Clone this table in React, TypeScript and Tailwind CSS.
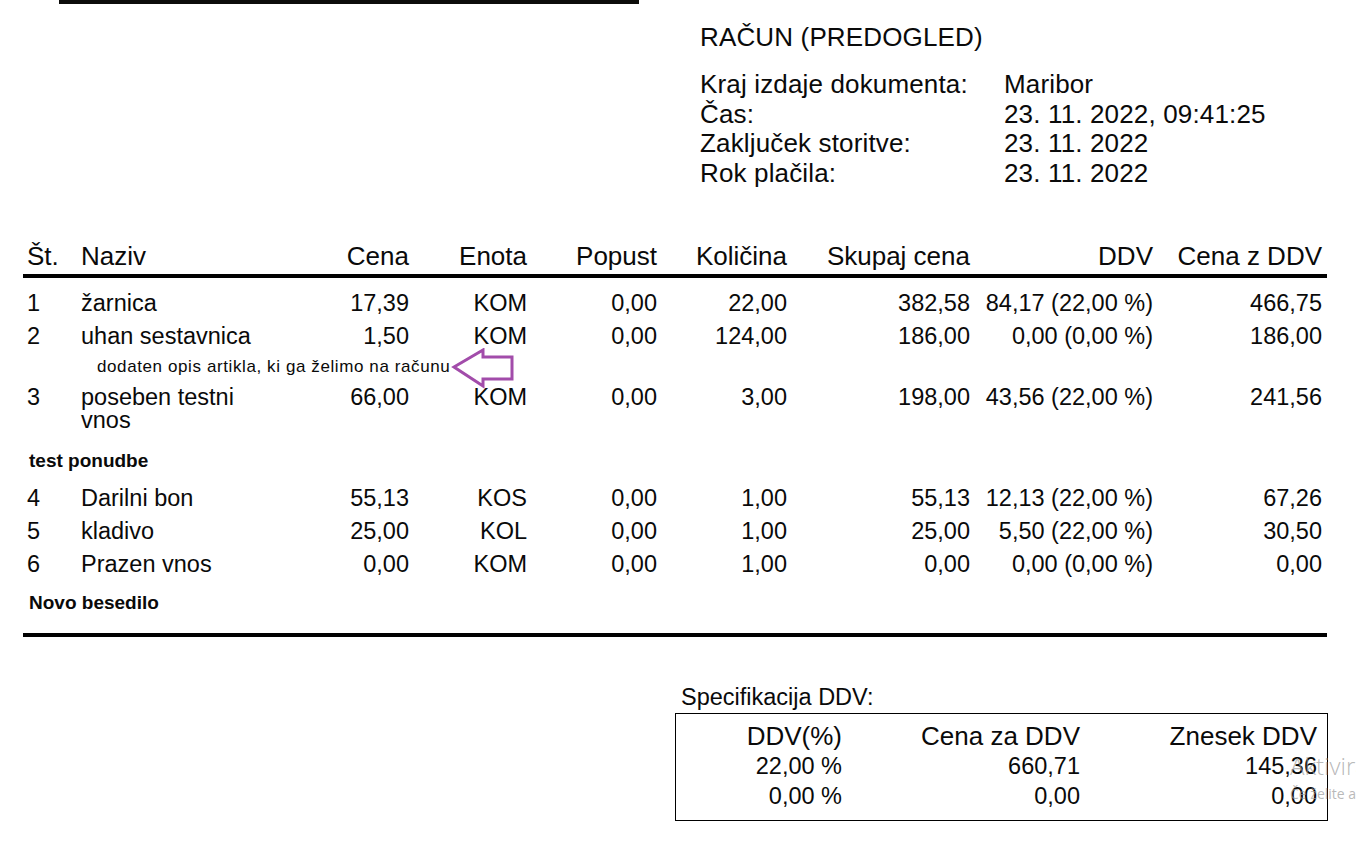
import React from "react";

const cols = "grid grid-cols-[58px_219px_109px_118px_130px_130px_183px_183px_169px] pr-[5px]";

type Row = { n: string; naziv: React.ReactNode; cena: string; enota: string; popust: string; kol: string; skupaj: string; ddv: string; zddv: string };

const rows1: Row[] = [
  { n: "1", naziv: "žarnica", cena: "17,39", enota: "KOM", popust: "0,00", kol: "22,00", skupaj: "382,58", ddv: "84,17 (22,00 %)", zddv: "466,75" },
  { n: "2", naziv: "uhan sestavnica", cena: "1,50", enota: "KOM", popust: "0,00", kol: "124,00", skupaj: "186,00", ddv: "0,00 (0,00 %)", zddv: "186,00" },
];
const row3: Row = { n: "3", naziv: (<>poseben testni<br />vnos</>), cena: "66,00", enota: "KOM", popust: "0,00", kol: "3,00", skupaj: "198,00", ddv: "43,56 (22,00 %)", zddv: "241,56" };
const rows2: Row[] = [
  { n: "4", naziv: "Darilni bon", cena: "55,13", enota: "KOS", popust: "0,00", kol: "1,00", skupaj: "55,13", ddv: "12,13 (22,00 %)", zddv: "67,26" },
  { n: "5", naziv: "kladivo", cena: "25,00", enota: "KOL", popust: "0,00", kol: "1,00", skupaj: "25,00", ddv: "5,50 (22,00 %)", zddv: "30,50" },
  { n: "6", naziv: "Prazen vnos", cena: "0,00", enota: "KOM", popust: "0,00", kol: "1,00", skupaj: "0,00", ddv: "0,00 (0,00 %)", zddv: "0,00" },
];

function ItemRow({ r }: { r: Row }) {
  return (
    <div className={`${cols} py-[5px] text-[23.5px] leading-[23px]`}>
      <div className="pl-[4px]">{r.n}</div>
      <div>{r.naziv}</div>
      <div className="text-right">{r.cena}</div>
      <div className="text-right">{r.enota}</div>
      <div className="text-right">{r.popust}</div>
      <div className="text-right">{r.kol}</div>
      <div className="text-right">{r.skupaj}</div>
      <div className="text-right">{r.ddv}</div>
      <div className="text-right">{r.zddv}</div>
    </div>
  );
}

export default function App() {
  return (
    <div
      className="relative w-[1356px] h-[842px] overflow-hidden bg-white text-[#0a0a0a]"
      style={{ fontFamily: '"Liberation Sans", Arial, sans-serif' }}
    >
      <div className="ml-[59px] w-[580px] h-[4px] bg-[#0c0c0a]" />

      <div className="ml-[700px] mt-[18px] text-[26px] leading-[30px] tracking-[0.15px]">RAČUN (PREDOGLED)</div>

      <div className="ml-[700px] mt-[18px] grid grid-cols-[304px_auto] text-[26px] leading-[29.5px] tracking-[0.15px]">
        <div>Kraj izdaje dokumenta:</div>
        <div>Maribor</div>
        <div>Čas:</div>
        <div>23. 11. 2022, 09:41:25</div>
        <div>Zaključek storitve:</div>
        <div>23. 11. 2022</div>
        <div>Rok plačila:</div>
        <div>23. 11. 2022</div>
      </div>

      <div className="ml-[23px] w-[1304px] mt-[52.75px] relative">
        <div className={`${cols} text-[26px] leading-[30px] pb-[3px]`}>
          <div className="pl-[4px]">Št.</div>
          <div>Naziv</div>
          <div className="text-right">Cena</div>
          <div className="text-right">Enota</div>
          <div className="text-right">Popust</div>
          <div className="text-right">Količina</div>
          <div className="text-right">Skupaj cena</div>
          <div className="text-right">DDV</div>
          <div className="text-right">Cena z DDV</div>
        </div>
        <div className="h-[4px] bg-black" />
        <div className="h-[9.5px]" />
        {rows1.map((r) => (
          <ItemRow key={r.n} r={r} />
        ))}
        <div className="h-[28px] pl-[74px] pt-[4px] text-[17px] leading-[20px] tracking-[0.6px]">
          dodaten opis artikla, ki ga želimo na računu
        </div>
        <ItemRow r={row3} />
        <div className="pl-[6px] pt-[11.5px] pb-[9.5px] text-[19px] leading-[24px] font-bold">test ponudbe</div>
        {rows2.map((r) => (
          <ItemRow key={r.n} r={r} />
        ))}
        <div className="pl-[6px] pt-[9.5px] pb-[18px] text-[19px] leading-[24px] font-bold">Novo besedilo</div>
        <div className="h-[4px] bg-black" />

        <svg
          className="absolute left-[428px] top-[107px]"
          width="64"
          height="42"
          viewBox="0 0 64 42"
        >
          <path
            d="M3 19 L32 2 L32 9 L61 9 L61 31 L32 31 L32 38 Z"
            fill="none"
            stroke="#a24caa"
            strokeWidth="3"
            strokeLinejoin="miter"
          />
        </svg>
      </div>

      <div className="ml-[681px] mt-[46px] text-[23.5px] leading-[28px] mb-[2px]">Specifikacija DDV:</div>
      <div className="ml-[675px] w-[653px] border border-black pt-[7px] pb-[9px]">
        <div className="grid grid-cols-[166px_238px_237px] text-[26px] leading-[30px]">
          <div className="text-right">DDV(%)</div>
          <div className="text-right">Cena za DDV</div>
          <div className="text-right">Znesek DDV</div>
        </div>
        <div className="grid grid-cols-[166px_238px_237px] text-[23.5px] leading-[30px]">
          <div className="text-right">22,00 %</div>
          <div className="text-right">660,71</div>
          <div className="text-right">145,36</div>
          <div className="text-right">0,00 %</div>
          <div className="text-right">0,00</div>
          <div className="text-right">0,00</div>
        </div>
      </div>

      <div
        className="absolute left-[1290px] top-[750px] whitespace-nowrap text-[#9a9a9a]/70 pointer-events-none"
        style={{ fontFamily: '"Open Sans", "Noto Sans", sans-serif' }}
      >
        <div className="text-[24px] leading-[32px] font-light">Aktivirajte Windows</div>
        <div className="text-[14px] leading-[20px] mt-[2px]">Če želite aktivirati Windows, pojdite v nastavitve.</div>
      </div>
    </div>
  );
}
